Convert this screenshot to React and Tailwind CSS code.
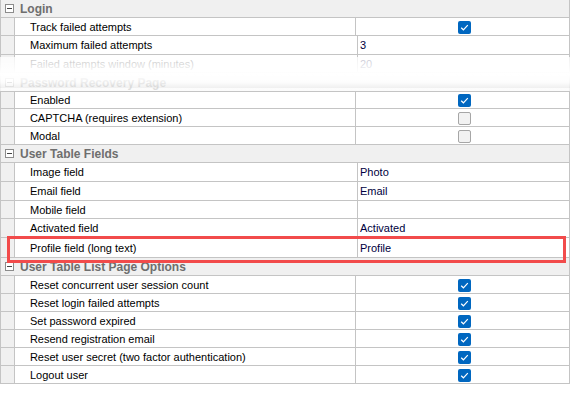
import React from 'react';

const rows = [
  { type: 'header', label: 'Login', h: 'h-[18px]' },
  { label: 'Track failed attempts', check: true, h: 'h-[18px]' },
  { label: 'Maximum failed attempts', value: '3', h: 'h-[19px]' },
  { label: 'Failed attempts window (minutes)', value: '20', h: 'h-[18px]' },
  { type: 'header', label: 'Password Recovery Page', h: 'h-[19px]' },
  { label: 'Enabled', check: true, h: 'h-[17px]' },
  { label: 'CAPTCHA (requires extension)', check: false, h: 'h-[18px]' },
  { label: 'Modal', check: false, h: 'h-[18px]' },
  { type: 'header', label: 'User Table Fields', h: 'h-[18px]' },
  { label: 'Image field', value: 'Photo', h: 'h-[19px]' },
  { label: 'Email field', value: 'Email', h: 'h-[19px]' },
  { label: 'Mobile field', value: '', h: 'h-[18px]' },
  { label: 'Activated field', value: 'Activated', h: 'h-[19px]' },
  { label: 'Profile field (long text)', value: 'Profile', h: 'h-[20px]' },
  { type: 'header', label: 'User Table List Page Options', h: 'h-[18px]' },
  { label: 'Reset concurrent user session count', check: true, h: 'h-[18px]' },
  { label: 'Reset login failed attempts', check: true, h: 'h-[18px]' },
  { label: 'Set password expired', check: true, h: 'h-[18px]' },
  { label: 'Resend registration email', check: true, h: 'h-[18px]' },
  { label: 'Reset user secret (two factor authentication)', check: true, h: 'h-[18px]' },
  { label: 'Logout user', check: true, h: 'h-[18px]' },
];

function CheckBox({ checked }) {
  if (!checked) {
    return <span className="block w-[13px] h-[13px] rounded-[2px] border border-[#a6a6a6] bg-[#f2f2f2]" />;
  }
  return (
    <span className="flex items-center justify-center w-[13px] h-[13px] rounded-[2px] bg-[#0067c0]">
      <svg width="9" height="9" viewBox="0 0 9 9">
        <path d="M1.2 4.8 L3.4 6.8 L7.8 2.2" fill="none" stroke="#fff" strokeWidth="1.2" />
      </svg>
    </span>
  );
}

function Row({ row }) {
  if (row.type === 'header') {
    return (
      <div className={`${row.h} box-border flex items-center bg-[#f0f0f0] border-b border-[#c4c4c4]`}>
        <span className="ml-[4px] w-[9px] h-[9px] border border-[#8c8c8c] bg-white flex items-center justify-center">
          <span className="block w-[5px] h-px bg-[#444]" />
        </span>
        <span className="ml-[6px] pt-px font-bold text-[12px] text-[#6e6e6e]">{row.label}</span>
      </div>
    );
  }
  return (
    <div className={`${row.h} box-border flex border-b border-[#c4c4c4]`}>
      <div className="w-[14px] bg-[#f0f0f0] border-r border-[#c4c4c4]" />
      <div className="w-[343px] pl-[15px] pt-px flex items-center border-r border-[#c4c4c4] text-black">
        {row.label}
      </div>
      <div className="flex-1 flex items-center pl-[2px] pt-px text-[#000040]">
        {row.check !== undefined ? (
          <div className="w-[211px] flex justify-center pl-[1px]">
            <CheckBox checked={row.check} />
          </div>
        ) : (
          row.value
        )}
      </div>
    </div>
  );
}

export default function App() {
  return (
    <div className="w-[570px] h-[398px] bg-white font-['Liberation_Sans',Arial,sans-serif] text-[11px] leading-none relative overflow-hidden">
      <div className="w-[570px] border-x border-[#c4c4c4]">
        {rows.map((row, i) => (
          <Row key={i} row={row} />
        ))}
      </div>
      <div className="absolute left-0 top-[57px] w-[570px] h-[34px] bg-linear-to-b from-white/75 via-white to-white/75" />
      <div className="absolute left-0 top-[82px] w-[570px] h-[6px] bg-linear-to-b from-transparent to-black/5" />
      <div className="absolute left-[7px] top-[236px] w-[559px] h-[27px] border-[3px] border-[#f24b4b]" />
    </div>
  );
}
